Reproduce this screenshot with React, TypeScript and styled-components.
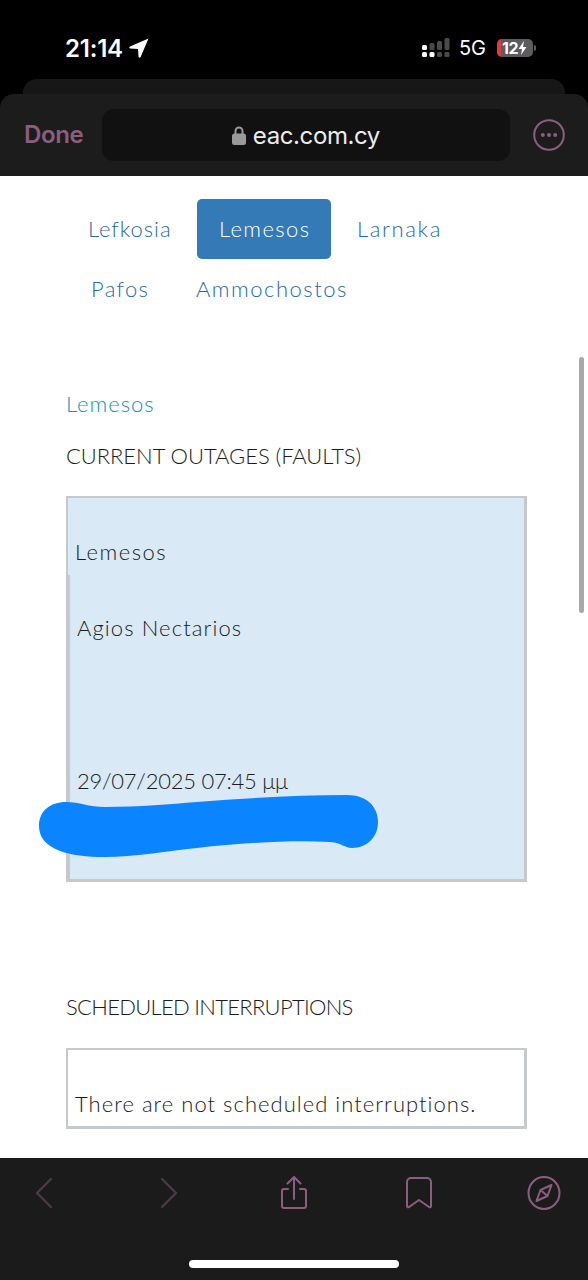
import styled, { createGlobalStyle } from "styled-components";

const GlobalStyle = createGlobalStyle`
  html, body {
    margin: 0;
    padding: 0;
    background: #000;
  }
  * {
    box-sizing: border-box;
  }
`;

const Phone = styled.div`
  position: relative;
  width: 588px;
  height: 1280px;
  display: flex;
  flex-direction: column;
  overflow: hidden;
  background: #000;
  font-family: "Lato", "Liberation Sans", sans-serif;
`;

const StatusBar = styled.div`
  height: 79px;
  flex-shrink: 0;
  display: flex;
  align-items: flex-start;
  justify-content: space-between;
  padding: 34px 52px 0 65px;
  color: #fff;
  font-family: "Inter", "Liberation Sans", sans-serif;
`;

const Time = styled.div`
  display: flex;
  align-items: center;
  gap: 6px;
  height: 28px;
  font-size: 24px;
  font-weight: 600;
  letter-spacing: -0.2px;
`;

const StatusRight = styled.div`
  display: flex;
  align-items: center;
  height: 28px;
`;

const Network = styled.span`
  margin: 0 11px 0 9px;
  font-size: 20px;
  font-weight: 400;
`;

const Battery = styled.div`
  position: relative;
  width: 36px;
  height: 18px;
  border-radius: 5px;
  overflow: hidden;
  background: #5c5c5e;
  display: flex;
  align-items: center;
  padding-left: 5px;
  font-size: 16px;
  font-weight: 700;
  letter-spacing: -0.3px;
`;

const BatteryLevel = styled.div`
  position: absolute;
  left: 0;
  top: 0;
  bottom: 0;
  width: 4px;
  background: #e5383b;
`;

const BatteryNub = styled.div`
  width: 2px;
  height: 6px;
  margin-left: 1px;
  border-radius: 0 2px 2px 0;
  background: #5c5c5e;
`;

const BackSheet = styled.div`
  height: 15px;
  flex-shrink: 0;
  margin: 0 23px;
  border-radius: 14px 14px 0 0;
  background: #171717;
`;

const Toolbar = styled.div`
  height: 82px;
  flex-shrink: 0;
  display: flex;
  align-items: flex-start;
  padding: 15px 23px 0 24px;
  border-radius: 14px 14px 0 0;
  background: #1c1c1d;
`;

const DoneButton = styled.div`
  width: 78px;
  height: 52px;
  line-height: 52px;
  font-family: "Inter", "Liberation Sans", sans-serif;
  font-size: 24px;
  font-weight: 600;
  letter-spacing: -0.4px;
  color: #8c5e7e;
`;

const UrlBar = styled.div`
  width: 409px;
  height: 52px;
  display: flex;
  align-items: center;
  justify-content: center;
  gap: 7px;
  border-radius: 12px;
  background: #111112;
  color: #ececec;
  font-family: "Inter", "Liberation Sans", sans-serif;
  font-size: 24px;
  letter-spacing: -0.4px;
`;

const MoreButton = styled.div`
  margin: 10px 0 0 23px;
  height: 32px;
`;

const Content = styled.main`
  flex: 1;
  min-height: 0;
  overflow: hidden;
  background: #fff;
  padding: 23px 61px 0 66px;
  color: #1c1c1c;
  font-weight: 300;
  font-size: 22px;
  letter-spacing: 1px;
`;

const Tabs = styled.ul`
  margin: 0;
  padding: 0;
  list-style: none;
  display: flex;
  flex-wrap: wrap;
  column-gap: 4px;
`;

const Tab = styled.li<{ $active?: boolean; $width: number; $inset: number; $spacing: number }>`
  width: ${(props) => props.$width}px;
  height: 60px;
  line-height: 60px;
  padding-left: ${(props) => props.$inset}px;
  border-radius: 5px;
  letter-spacing: ${(props) => props.$spacing}px;
  white-space: nowrap;
  color: ${(props) => (props.$active ? "#fff" : "#1f69ab")};
  background: ${(props) => (props.$active ? "#337ab7" : "transparent")};
`;

const RegionName = styled.div`
  margin-top: 70px;
  height: 30px;
  line-height: 30px;
  letter-spacing: 1px;
  color: #0a92c4;
`;

const SectionHeading = styled.h3<{ $top: number; $spacing: number }>`
  margin: ${(props) => props.$top}px 0 0;
  height: 30px;
  line-height: 30px;
  font-size: 22px;
  font-weight: 300;
  white-space: nowrap;
  letter-spacing: ${(props) => props.$spacing}px;
`;

const OutageBox = styled.div`
  margin-top: 25px;
  height: 386px;
  border: 2px solid #c5c9cc;
  border-width: 2px 3px 3px 2px;
  background: #d9e9f5;
`;

const OutageArea = styled.div`
  height: 77px;
  padding: 39px 0 0 7px;
  line-height: 30px;
  letter-spacing: 1.5px;
`;

const OutageDetails = styled.div`
  height: 304px;
  border-left: 2px solid #c5c9cc;
  padding: 38px 0 0 7px;
  line-height: 30px;
  letter-spacing: 1.1px;
`;

const OutageTime = styled.div`
  margin-top: 123px;
  letter-spacing: -0.25px;
`;

const InterruptionBox = styled.div`
  margin-top: 26px;
  height: 81px;
  border: 3px solid #c5c9cc;
  border-width: 2px 3px 3px 2px;
  padding: 39px 0 0 7px;
  line-height: 30px;
  white-space: nowrap;
  letter-spacing: 1.03px;
`;

const Scribble = styled.svg`
  position: absolute;
  left: 0;
  top: 0;
  pointer-events: none;
`;

const ScrollThumb = styled.div`
  position: absolute;
  left: 579px;
  top: 357px;
  width: 5px;
  height: 256px;
  border-radius: 3px;
  background: #a9a9a9;
`;

const BottomBar = styled.nav`
  position: relative;
  height: 122px;
  flex-shrink: 0;
  display: flex;
  align-items: flex-start;
  justify-content: space-between;
  padding: 17px 26px 0 26px;
  background: #1c1b1c;
`;

const BarIcon = styled.svg`
  display: block;
  width: 36px;
  height: 36px;
  fill: none;
  stroke-width: 2;
  stroke-linecap: round;
  stroke-linejoin: round;
  stroke: #8c5e7e;
`;

const DimIcon = styled(BarIcon)`
  stroke: #4d3a47;
  stroke-width: 2.4;
`;

const HomeIndicator = styled.div`
  position: absolute;
  left: 189px;
  bottom: 12px;
  width: 210px;
  height: 8px;
  border-radius: 4px;
  background: #fff;
`;

const tabs = [
  { label: "Lefkosia", width: 127, inset: 22, spacing: 0.95 },
  { label: "Lemesos", width: 134, inset: 22, spacing: 1.4, active: true },
  { label: "Larnaka", width: 129, inset: 22, spacing: 1.65 },
  { label: "Pafos", width: 104, inset: 25, spacing: 1.35 },
  { label: "Ammochostos", width: 195, inset: 22, spacing: 1.5 },
];

const LocationArrow = () => (
  <svg width="20" height="20" viewBox="0 0 20 20" fill="#fff">
    <path d="M19.5 0.5 L1 8.4 Q-0.5 9.6 1 10.4 L9 11 L9.6 19 Q10.4 20.5 11.6 19 Z" />
  </svg>
);

const SignalBars = () => (
  <svg width="28" height="20" viewBox="0 0 28 20">
    <rect x="0" y="7" width="5" height="5" rx="1.5" fill="#fff" />
    <rect x="0" y="14" width="5" height="5" rx="1.5" fill="#fff" />
    <rect x="7.5" y="5" width="5" height="7" rx="1.5" fill="#4a4a4a" />
    <rect x="7.5" y="14" width="5" height="5" rx="1.5" fill="#fff" />
    <rect x="15" y="3" width="5" height="9" rx="1.5" fill="#4a4a4a" />
    <rect x="15" y="14" width="5" height="5" rx="1.5" fill="#4a4a4a" />
    <rect x="22.5" y="0" width="5" height="12" rx="1.5" fill="#4a4a4a" />
    <rect x="22.5" y="14" width="5" height="5" rx="1.5" fill="#4a4a4a" />
  </svg>
);

const Bolt = () => (
  <svg width="9" height="14" viewBox="0 0 9 14" fill="#fff">
    <path d="M6 0 L0.5 8 H4 L3 14 L8.5 6 H5 Z" />
  </svg>
);

const Lock = () => (
  <svg width="14" height="19" viewBox="0 0 14 19">
    <path d="M3.5 8 V5 a3.5 3.5 0 0 1 7 0 V8" fill="none" stroke="#9a9a9a" strokeWidth="2" />
    <rect x="0" y="7.5" width="14" height="11.5" rx="2.5" fill="#9a9a9a" />
  </svg>
);

const MoreIcon = () => (
  <svg width="32" height="32" viewBox="0 0 32 32">
    <circle cx="16" cy="16" r="14.8" fill="none" stroke="#8c5e7e" strokeWidth="2" />
    <circle cx="9.8" cy="16" r="2" fill="#8c5e7e" />
    <circle cx="16" cy="16" r="2" fill="#8c5e7e" />
    <circle cx="22.2" cy="16" r="2" fill="#8c5e7e" />
  </svg>
);

export default function App() {
  return (
    <Phone>
      <GlobalStyle />
      <StatusBar>
        <Time>
          21:14
          <LocationArrow />
        </Time>
        <StatusRight>
          <SignalBars />
          <Network>5G</Network>
          <Battery>
            <BatteryLevel />
            12
            <Bolt />
          </Battery>
          <BatteryNub />
        </StatusRight>
      </StatusBar>
      <BackSheet />
      <Toolbar>
        <DoneButton>Done</DoneButton>
        <UrlBar>
          <Lock />
          eac.com.cy
        </UrlBar>
        <MoreButton>
          <MoreIcon />
        </MoreButton>
      </Toolbar>
      <Content>
        <Tabs>
          {tabs.map((tab) => (
            <Tab
              key={tab.label}
              $active={tab.active}
              $width={tab.width}
              $inset={tab.inset}
              $spacing={tab.spacing}
            >
              {tab.label}
            </Tab>
          ))}
        </Tabs>
        <RegionName>Lemesos</RegionName>
        <SectionHeading $top={22} $spacing={-0.05}>
          CURRENT OUTAGES (FAULTS)
        </SectionHeading>
        <OutageBox>
          <OutageArea>Lemesos</OutageArea>
          <OutageDetails>
            Agios Nectarios
            <OutageTime>29/07/2025 07:45 μμ</OutageTime>
          </OutageDetails>
        </OutageBox>
        <SectionHeading $top={110} $spacing={-0.7}>
          SCHEDULED INTERRUPTIONS
        </SectionHeading>
        <InterruptionBox>There are not scheduled interruptions.</InterruptionBox>
      </Content>
      <BottomBar>
        <DimIcon viewBox="0 0 36 36">
          <path d="M25 4 L11 18 L25 32" />
        </DimIcon>
        <DimIcon viewBox="0 0 36 36">
          <path d="M11 4 L25 18 L11 32" />
        </DimIcon>
        <BarIcon viewBox="0 0 36 36">
          <path d="M12 14 H8 a2 2 0 0 0 -2 2 V31 a2 2 0 0 0 2 2 H28 a2 2 0 0 0 2 -2 V16 a2 2 0 0 0 -2 -2 H24" />
          <path d="M18 24 V2 M11.5 8.5 L18 2 L24.5 8.5" />
        </BarIcon>
        <BarIcon viewBox="0 0 36 36">
          <path d="M10 3 H26 a4 4 0 0 1 4 4 V31 Q30 33 28 32 L18 25 L8 32 Q6 33 6 31 V7 a4 4 0 0 1 4 -4 Z" />
        </BarIcon>
        <BarIcon viewBox="0 0 36 36">
          <ellipse cx="18" cy="18" rx="15.5" ry="16" />
          <path d="M25.5 10 L21.5 21 L10.5 26 L14.5 15 Z M14.5 15 L21.5 21" />
        </BarIcon>
        <HomeIndicator />
      </BottomBar>
      <Scribble width="588" height="1280" viewBox="0 0 588 1280">
        <path
          fill="#0a84ff"
          d="M39 826 C39 811 50 802 66 802 C80 802 88 807 105 807 C140 807 170 804 197 802 C250 798 300 795 347 795 C366 795 378 806 378 822 C378 837 367 848 352 848 C345 848 342 843 330 842 C290 840 240 843 197 848 C165 851 135 857 105 857 C70 857 39 850 39 826 Z"
        />
      </Scribble>
      <ScrollThumb />
    </Phone>
  );
}
